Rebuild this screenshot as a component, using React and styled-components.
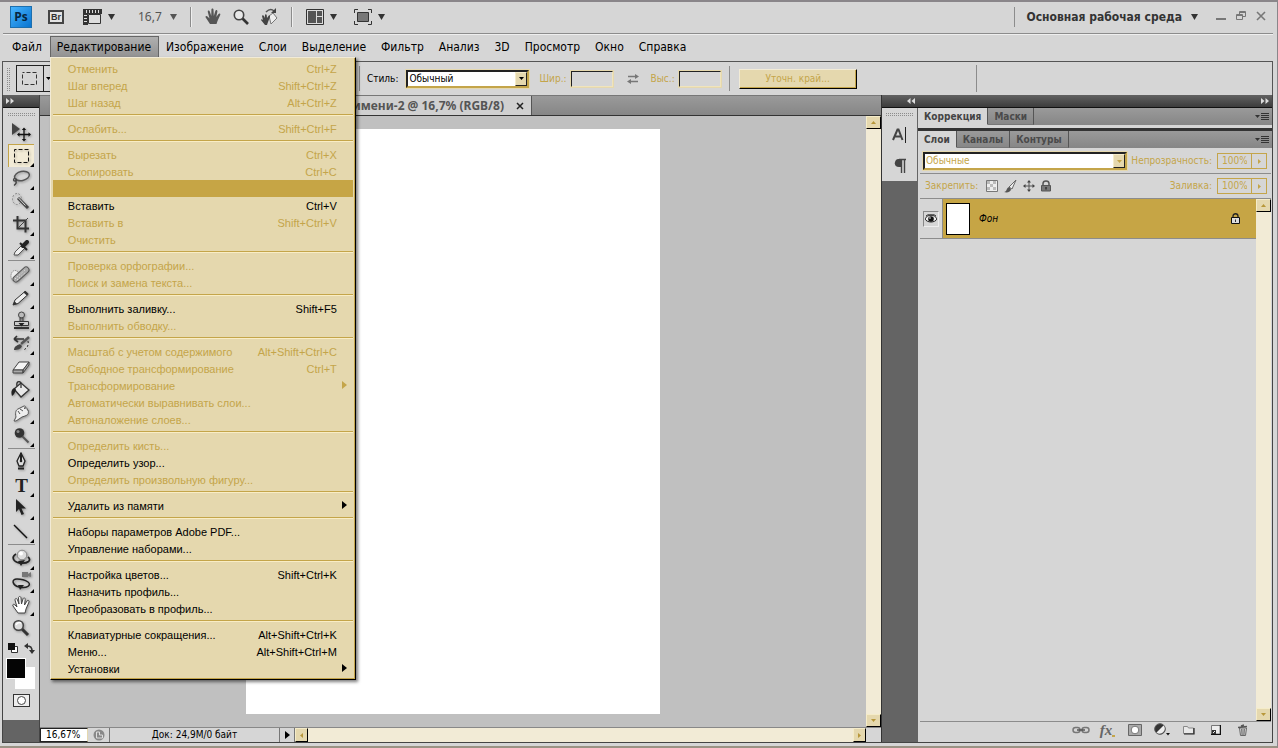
import React from "react"
import styled, { createGlobalStyle } from "styled-components"

const mainMenu = ["Файл", "Редактирование", "Изображение", "Слои", "Выделение", "Фильтр", "Анализ", "3D", "Просмотр", "Окно", "Справка"]

const editMenu = [
  [
    { text: "Отменить", keys: "Ctrl+Z", off: true },
    { text: "Шаг вперед", keys: "Shift+Ctrl+Z", off: true },
    { text: "Шаг назад", keys: "Alt+Ctrl+Z", off: true },
  ],
  [{ text: "Ослабить...", keys: "Shift+Ctrl+F", off: true }],
  [
    { text: "Вырезать", keys: "Ctrl+X", off: true },
    { text: "Скопировать", keys: "Ctrl+C", off: true },
    { text: "", hot: true },
    { text: "Вставить", keys: "Ctrl+V" },
    { text: "Вставить в", keys: "Shift+Ctrl+V", off: true },
    { text: "Очистить", off: true },
  ],
  [
    { text: "Проверка орфографии...", off: true },
    { text: "Поиск и замена текста...", off: true },
  ],
  [
    { text: "Выполнить заливку...", keys: "Shift+F5" },
    { text: "Выполнить обводку...", off: true },
  ],
  [
    { text: "Масштаб с учетом содержимого", keys: "Alt+Shift+Ctrl+C", off: true },
    { text: "Свободное трансформирование", keys: "Ctrl+T", off: true },
    { text: "Трансформирование", sub: true, off: true },
    { text: "Автоматически выравнивать слои...", off: true },
    { text: "Автоналожение слоев...", off: true },
  ],
  [
    { text: "Определить кисть...", off: true },
    { text: "Определить узор..." },
    { text: "Определить произвольную фигуру...", off: true },
  ],
  [{ text: "Удалить из памяти", sub: true }],
  [{ text: "Наборы параметров Adobe PDF..." }, { text: "Управление наборами..." }],
  [
    { text: "Настройка цветов...", keys: "Shift+Ctrl+K" },
    { text: "Назначить профиль..." },
    { text: "Преобразовать в профиль..." },
  ],
  [
    { text: "Клавиатурные сокращения...", keys: "Alt+Shift+Ctrl+K" },
    { text: "Меню...", keys: "Alt+Shift+Ctrl+M" },
    { text: "Установки", sub: true },
  ],
]

const tools = [
  [
    { name: "move", single: true, art: <><path d="M4 1v12l8-6z" fill="#444" /><path d="M16 7v11M11 12.500h10" stroke="#111" strokeWidth="1.300" /><path d="M16 5.500l2.200 2.500h-4.400zM16 19.500l2.200-2.500h-4.400zM9 12.500l2.500-2.200v4.400zM23 12.500l-2.500-2.200v4.400z" fill="#111" /></> },
    { name: "marquee", active: true, art: <rect x="6.500" y="4.500" width="14" height="13" fill="none" stroke="#111" strokeDasharray="4 2" strokeDashoffset="2" /> },
    { name: "lasso", art: <><ellipse cx="14" cy="8" rx="7.500" ry="4.500" transform="rotate(-12 14 8)" fill="none" stroke="#555" strokeWidth="1.500" /><path d="M7 10c-2 1-2 3 0 3s2-2 .5-2.500M8 13c1 2 0 3-2 4.500" fill="none" stroke="#444" strokeWidth="1.300" /></> },
    { name: "wand", art: <><ellipse cx="9" cy="8" rx="4.500" ry="5.500" fill="none" stroke="#888" strokeDasharray="2 1.500" /><path d="M10 7l10 10" stroke="#444" strokeWidth="3" /><path d="M10.500 7l7 7.500" stroke="#ddd" strokeWidth="1" /></> },
    { name: "crop", art: <><path d="M5 6.500h12.500v12M9.500 2v12.500H21" fill="none" stroke="#333" strokeWidth="2" /><path d="M10 14l10-10" stroke="#444" /></> },
    { name: "eyedropper", art: <><path d="M6 18l1-3 7-7 3 3-7 7z" fill="#eee" stroke="#555" /><path d="M12 6l7 7" stroke="#222" strokeWidth="2" /><path d="M15 9l4-4" stroke="#222" strokeWidth="4" strokeLinecap="round" /></> },
  ],
  [
    { name: "healing", art: <><ellipse cx="7" cy="12" rx="4" ry="5.500" fill="#eee" stroke="#777" strokeDasharray="1 1" /><path d="M8 15L18 6" stroke="#555" strokeWidth="7" strokeLinecap="round" /><path d="M8 15L18 6" stroke="#aaa" strokeWidth="5" strokeLinecap="round" /><path d="M7 15L18 5M9 16l9-8" stroke="#eee" strokeDasharray="1 2" /></> },
    { name: "pencil", art: <><path d="M5 18l2-5L17 4.500l3 3L10 16.500z" fill="#eee" stroke="#333" /><path d="M5 18l1.500-4 2.500 3zM15.500 5.500l1.800-1.800 3.200 3-1.700 1.800z" fill="#333" /></> },
    { name: "stamp", art: <><circle cx="13.500" cy="5" r="3" fill="#bbb" stroke="#444" /><path d="M12 8h3v4h-3z" fill="#888" stroke="#444" /><path d="M6.500 11.500h14v4h-14z" fill="#ccc" stroke="#333" /><path d="M6 18h15" stroke="#333" strokeWidth="2" /><path d="M10.500 13h6l-3 3.500z" fill="#222" /></> },
    { name: "history", art: <><path d="M6 6h10M6 6l3-3M6 6l4 3" stroke="#333" strokeWidth="1.600" fill="none" /><path d="M6 17c0-4 4-5 6-6l2 2c-1 3-4 4-8 4z" fill="#444" /><path d="M13 11l8-7" stroke="#555" strokeWidth="2.500" /><path d="M20 8c1 4-1 8-5 9" fill="none" stroke="#222" strokeDasharray="2 2" /></> },
    { name: "eraser", art: <><path d="M5 14l6-8h10l-6 8z" fill="#f4f4f4" stroke="#444" /><path d="M5 14v3h10v-3zM15 17l6-8V6l-6 8z" fill="#aaa" stroke="#444" /></> },
    { name: "bucket", art: <><path d="M6 10l7-6 8 7-8 7z" fill="#e8e8e8" stroke="#333" strokeWidth="1.300" /><path d="M9 7c-1-4 2-6 4-3v5" fill="none" stroke="#333" strokeWidth="1.300" /><path d="M7 9c-4 1-4 4-3 8 2-1 3-4 4-6z" fill="#222" /></> },
    { name: "smudge", art: <path d="M6 19l2-4c-1-5 0-7 2-8l6-3c2 0 2 1 0 2.500 3-1 4 0 3 1.500 2 0 2 1 1 2 1 1 0 3-3 4l-3 1-6 4zM10 9l2 3M12 7l3 2" fill="#eee" stroke="#555" /> },
    { name: "burn", art: <><circle cx="11.500" cy="8" r="4.800" fill="#333" /><circle cx="10" cy="6.500" r="1.500" fill="#888" /><path d="M14.500 11.500l6 6" stroke="#555" strokeWidth="2" /></> },
  ],
  [
    { name: "pen", art: <><path d="M13 1l4 8-2 5h-4l-2-5z" fill="#ddd" stroke="#222" strokeWidth="1.300" /><path d="M13 1v7M10 16.500h6" stroke="#222" strokeWidth="2" /><circle cx="13" cy="9" r="1.300" fill="#222" /></> },
    { name: "type", type: true },
    { name: "path", art: <path d="M8 1v13l3-3 2.500 6 2.500-1-2.500-5.500H18z" fill="#222" /> },
    { name: "line", art: <path d="M6 4l13 13" stroke="#111" strokeWidth="1.400" /> },
  ],
  [
    { name: "rotate3d", art: <><path d="M8 6c-5 3-3 8 4 9 8 1 12-3 8-6" fill="none" stroke="#222" strokeWidth="1.800" /><path d="M17 12l-4 6-3-5z" fill="#222" /><circle cx="14" cy="7" r="4.800" fill="#ddd" stroke="#888" /><circle cx="13" cy="5.500" r="2" fill="#fff" /></> },
    { name: "orbit3d", art: <><path d="M9 8c-6 0-5 6 2 8 8 2 13-2 9-5-3-2-7-3-11-3" fill="none" stroke="#222" strokeWidth="1.500" /><path d="M16 14l-4 5-2-5z" fill="#222" /><path d="M14 1h6v5h-6zM20 3l3-2v5l-3-1z" fill="#777" /></> },
    { name: "hand", art: <path d="M10 19l-5-7c-1-2 1-2 2-1l2 2-2-7c0-2 2-2 2.500 0l1.500 4-.5-6c0-2 2.300-2 2.500 0l.5 6 1.500-5c.5-2 2.500-1 2.200.5L16.500 11l2.500-4c1-1.500 2.500-.5 2 1l-3 7-1 4z" fill="#fff" stroke="#444" /> },
    { name: "zoom", single: true, art: <><path d="M14 12l6 6" stroke="#333" strokeWidth="3" /><circle cx="10.500" cy="8.500" r="4.800" fill="#ddd" stroke="#444" strokeWidth="1.600" /><path d="M8 8c1-2 3-3 5-2" stroke="#fff" strokeWidth="1.500" fill="none" /></> },
  ],
]

const Down = () => <svg width="7" height="6" viewBox="0 0 7 6"><path d="M0 0h7L3.500 6z" fill="currentColor" /></svg>
const SmallDown = () => <svg width="5" height="3" viewBox="0 0 5 3"><path d="M0 0h5L2.500 3z" fill="currentColor" /></svg>
const SmallUp = () => <svg width="5" height="3" viewBox="0 0 5 3"><path d="M0 3h5L2.500 0z" fill="currentColor" /></svg>
const SmallRight = () => <svg width="3" height="5" viewBox="0 0 3 5"><path d="M0 0v5l3-2.500z" fill="currentColor" /></svg>
const SmallLeft = () => <svg width="3" height="5" viewBox="0 0 3 5"><path d="M3 0v5L0 2.500z" fill="currentColor" /></svg>
const Play = () => <svg width="5" height="8" viewBox="0 0 5 8"><path d="M0 0v8l5-4z" fill="currentColor" /></svg>
const Chevrons = ({ left }) => (
  <svg width="8" height="6" viewBox="0 0 8 6">
    <path d={left ? "M3.500 0v6L0 3zM8 0v6L4.500 3z" : "M0 0v6l3.500-3zM4.500 0v6L8 3z"} fill="#ddd" />
  </svg>
)
const PanelMenuIcon = () => (
  <svg width="14" height="8" viewBox="0 0 14 8">
    <path d="M0 2h5L2.500 5z" fill="#333" />
    <path d="M6 .5h8M6 2.500h8M6 4.500h8M6 6.500h8" stroke="#333" />
  </svg>
)

const App = () => {
  return (
    <>
      <Global />
      <Window>
        <AppBar>
          <Logo>Ps</Logo>
          <BridgeButton>Br</BridgeButton>
          <BarButton aria-label="extras">
            <svg width="19" height="16" viewBox="0 0 19 16">
              <path d="M0 0h19v5H5v11H0z" fill="#333" />
              <path d="M5.500 5.500h12v9h-12z" fill="#ddd" stroke="#333" />
              <path d="M3.500 1v3M6.500 1v3M9.500 1v3M12.500 1v3M15.500 1v3M1 6.500h3M1 9.500h3M1 12.500h3" stroke="#ddd" />
            </svg>
            <Down />
          </BarButton>
          <ZoomLevel>16,7 <Down /></ZoomLevel>
          <BarLine />
          <IconGroup>
            <BarButton aria-label="hand">
              <svg width="16" height="17" viewBox="0 0 16 17"><path d="M5 16L.7 9.500C0 8 1.500 7.500 2.500 8.500L4.500 10.500 2.800 4C2.500 2.300 4.400 2 4.800 3.600L6.300 8 6.400 1.600C6.500 0 8.400 0 8.500 1.600L8.800 8l1.600-5.200c.6-1.500 2.200-.9 2 .7L11.300 9l2.200-3c1-1.200 2.300-.5 1.700 1L12.500 13l-1 3z" fill="#555" /></svg>
            </BarButton>
            <BarButton aria-label="zoom">
              <svg width="16" height="16" viewBox="0 0 16 16"><path d="M9 9l6 6" stroke="#333" strokeWidth="2.600" /><circle cx="6" cy="6" r="4.700" fill="#e8e8e8" stroke="#444" strokeWidth="1.600" /></svg>
            </BarButton>
            <BarButton aria-label="rotate view">
              <svg width="17" height="18" viewBox="0 0 17 18"><path d="M8 8l4-3 4 5-6 6z" fill="#eee" stroke="#777" /><path d="M4 17L0 12c0-1 1-1 2 0L1 8c0-1 1.500-1 2 0l1 2V7c0-1 1.500-1 1.700 0l.3 3 1.500-2c.7-1 2 0 1.500 1l-2 5-1 3z" fill="#444" /><path d="M5 4c3-3 6-3 8-1" fill="none" stroke="#555" strokeWidth="1.500" /><path d="M15 0v5h-5z" fill="#444" /></svg>
            </BarButton>
          </IconGroup>
          <BarLine />
          <BarButton aria-label="arrange">
            <svg width="18" height="16" viewBox="0 0 18 16"><path d="M.5.5h17v15H.5z" fill="#ddd" stroke="#333" /><path d="M2 2h8v12H2zM11 2h5v5h-5zM11 8h5v6h-5z" fill="#555" /></svg>
            <Down />
          </BarButton>
          <ScreenButton aria-label="screen mode">
            <svg width="18" height="16" viewBox="0 0 18 16"><path d="M.5 4V.5H4M14 .5h3.500V4M17.500 12v3.500H14M4 15.500H.5V12" fill="none" stroke="#333" /><path d="M3.500 3.500h11v9h-11z" fill="#777" stroke="#333" /></svg>
            <Down />
          </ScreenButton>
          <Workspace>
            Основная рабочая среда <Down />
          </Workspace>
          <WindowButton aria-label="minimize"><svg width="10" height="12" viewBox="0 0 10 12"><path d="M0 8h10" stroke="#777" strokeWidth="2" /></svg></WindowButton>
          <WindowButton aria-label="restore"><svg width="10" height="12" viewBox="0 0 10 12"><path d="M3.500 3V.5h6v5H7M3 1.500h7M.5 3.500h6v5h-6zM0 4.500h7" fill="none" stroke="#777" /></svg></WindowButton>
          <WindowButton aria-label="close"><svg width="10" height="12" viewBox="0 0 10 12"><path d="M1 1l8 8M9 1L1 9" stroke="#777" strokeWidth="1.600" /></svg></WindowButton>
        </AppBar>

        <MenuBar>
          {mainMenu.map((name) => (
            <MenuSlot key={name}>
              <MenuTitle $open={name === "Редактирование"}>{name}</MenuTitle>
              {name === "Редактирование" && (
                <DropMenu role="menu">
                  {editMenu.map((group, i) => (
                    <MenuGroup key={i}>
                      {group.map((item) => (
                        <MenuItem key={item.text} role="menuitem" disabled={item.off} $hot={item.hot}>
                          <span>{item.text}</span>
                          {item.keys && <span>{item.keys}</span>}
                          {item.sub && <SubArrow><Play /></SubArrow>}
                        </MenuItem>
                      ))}
                    </MenuGroup>
                  ))}
                </DropMenu>
              )}
            </MenuSlot>
          ))}
        </MenuBar>

        <Options>
          <PresetArea>
            <SideGrip />
            <Preset aria-label="tool preset">
              <svg width="26" height="25" viewBox="0 0 26 25"><path d="M5.500 6.500h14v12h-14z" fill="none" stroke="#333" strokeDasharray="4 2" strokeDashoffset="2" /></svg>
              <PresetArrow><SmallDown /></PresetArrow>
            </Preset>
          </PresetArea>
          <Label htmlFor="style">Стиль:</Label>
          <StyleSelect>
            <Select id="style"><option>Обычный</option></Select>
            <SelectArrow><SmallDown /></SelectArrow>
          </StyleSelect>
          <Label htmlFor="w" $off>Шир.:</Label>
          <SizeInput id="w" disabled />
          <SwapIcon width="14" height="12" viewBox="0 0 14 12">
            <path d="M2 3.500h8M12 8.500H4" stroke="#777" strokeWidth="1.500" /><path d="M9 1l4 2.500L9 6zM5 6L1 8.500 5 11z" fill="#777" />
          </SwapIcon>
          <Label htmlFor="h" $off>Выс.:</Label>
          <SizeInput id="h" disabled />
          <OptionLine />
          <Refine disabled>Уточн. край...</Refine>
          <EndLine />
        </Options>

        <Main>
          <ToolColumn>
            <DarkHead><Chevrons /></DarkHead>
            <ToolBox>
              <TopGrip />
              {tools.map((group, i) => (
                <ToolGroup key={i}>
                  {group.map((tool) => (
                    <Tool key={tool.name} aria-label={tool.name} $active={tool.active} $single={tool.single}>
                      {tool.type ? <TypeSign>T</TypeSign> : <svg width="26" height="22" viewBox="0 0 26 22">{tool.art}</svg>}
                    </Tool>
                  ))}
                </ToolGroup>
              ))}
              <MiniRow>
                <svg width="11" height="11" viewBox="0 0 11 11"><path d="M3.500 3.500h6v6h-6z" fill="#fff" stroke="#333" /><path d="M0 0h7v7H0z" fill="#111" /></svg>
                <svg width="11" height="11" viewBox="0 0 11 11"><path d="M2 3c5 0 6 1 6 6" fill="none" stroke="#333" strokeWidth="1.500" /><path d="M0 3l4-3v6zM8 11L5 7h6z" fill="#333" /></svg>
              </MiniRow>
              <Swatches>
                <BackColor aria-label="background" />
                <FrontColor aria-label="foreground" />
              </Swatches>
              <QuickMask aria-label="quick mask">
                <svg width="11" height="11" viewBox="0 0 11 11"><circle cx="5.500" cy="5.500" r="4" fill="#fff" stroke="#444" /></svg>
              </QuickMask>
            </ToolBox>
          </ToolColumn>

          <Documents>
            <DocTabs>
              <DocTab>Без имени-1 @ 16,7% (RGB/8)</DocTab>
              <DocTab $active>
                Без имени-2 @ 16,7% (RGB/8)
                <svg width="8" height="8" viewBox="0 0 8 8"><path d="M1 1l6 6M7 1L1 7" stroke="#222" strokeWidth="1.500" /></svg>
              </DocTab>
            </DocTabs>
            <View>
              <Canvas><Sheet /></Canvas>
              <VScroll>
                <ScrollButton aria-label="up"><SmallUp /></ScrollButton>
                <ScrollButton aria-label="down"><SmallDown /></ScrollButton>
              </VScroll>
            </View>
            <Status>
              <StatusZoom aria-label="zoom level" defaultValue="16,67%" />
              <StatusIcon aria-label="version">
                <svg width="12" height="12" viewBox="0 0 12 12"><circle cx="6" cy="6" r="5.500" fill="#888" /><path d="M3.500 9V3h3v3h3v3z" fill="none" stroke="#ddd" /></svg>
              </StatusIcon>
              <StatusInfo>Док: 24,9М/0 байт</StatusInfo>
              <StatusPlay aria-label="status menu"><Play /></StatusPlay>
              <HScroll>
                <ScrollButton aria-label="left" $side><SmallLeft /></ScrollButton>
                <ScrollButton aria-label="right" $side><SmallRight /></ScrollButton>
              </HScroll>
              <Corner />
            </Status>
          </Documents>

          <Dock>
            <DockStrip>
              <DarkHead $end><Chevrons left /></DarkHead>
              <StripBox>
                <TopGrip />
                <StripButton aria-label="character">
                  <svg width="15" height="20" viewBox="0 0 15 20"><path d="M1 14L5.500 3.500h1L10.500 14M2.500 10.500h7" fill="none" stroke="#444" strokeWidth="2" /><path d="M13.500 1v16" stroke="#222" /></svg>
                </StripButton>
                <StripButton aria-label="paragraph">
                  <svg width="12" height="16" viewBox="0 0 12 16"><path d="M7.500 15V1.500M10.500 15V1.500M5 1.500h7" stroke="#444" strokeWidth="1.400" /><path d="M7 1H4.500C0 1-1 9 5 9h2z" fill="#444" /></svg>
                </StripButton>
              </StripBox>
            </DockStrip>

            <Panels>
              <DarkHead $end><Chevrons /></DarkHead>
              <PanelTabs>
                <PanelTab $active>Коррекция</PanelTab>
                <PanelTab>Маски</PanelTab>
                <PanelMenu aria-label="panel menu"><PanelMenuIcon /></PanelMenu>
              </PanelTabs>
              <Gap />
              <PanelTabs>
                <PanelTab $active>Слои</PanelTab>
                <PanelTab>Каналы</PanelTab>
                <PanelTab>Контуры</PanelTab>
                <PanelMenu aria-label="panel menu"><PanelMenuIcon /></PanelMenu>
              </PanelTabs>
              <LayersPanel>
                <LayerOptions>
                  <BlendSelect>
                    <Select aria-label="blend mode" disabled><option>Обычные</option></Select>
                    <SelectArrow $off><SmallDown /></SelectArrow>
                  </BlendSelect>
                  <PercentLabel htmlFor="opacity">Непрозрачность:</PercentLabel>
                  <Percent>
                    <PercentInput id="opacity" disabled defaultValue="100%" />
                    <PercentArrow><SmallRight /></PercentArrow>
                  </Percent>
                </LayerOptions>
                <LayerOptions>
                  <LockLabel>Закрепить:</LockLabel>
                  <LockIcons>
                    <svg width="12" height="12" viewBox="0 0 12 12"><path d="M.5.5h11v11H.5z" fill="#eee" stroke="#777" /><path d="M1 1h3v3H1zM7 1h3v3H7zM4 4h3v3H4zM1 7h3v3H1zM7 7h3v3H7z" fill="#bbb" /></svg>
                    <svg width="13" height="13" viewBox="0 0 13 13"><path d="M5 7l7-7-4 9z" fill="#eee" stroke="#666" /><path d="M0 12c3 0 2-4 5-5l2 2c0 3-4 4-7 3z" fill="#555" /></svg>
                    <svg width="12" height="12" viewBox="0 0 12 12"><path d="M6 1v10M1 6h10" stroke="#555" /><path d="M6 0l2 2.500H4zM6 12l2-2.500H4zM0 6l2.500-2v4zM12 6L9.500 4v4z" fill="#444" /></svg>
                    <svg width="10" height="12" viewBox="0 0 10 12"><path d="M2 6V3.500c0-3.500 6-3.500 6 0V6" fill="none" stroke="#555" strokeWidth="1.500" /><path d="M.5 5.500h9v5.500h-9z" fill="#777" stroke="#555" /><path d="M5 7v2.500" stroke="#333" strokeWidth="1.500" /></svg>
                  </LockIcons>
                  <PercentLabel htmlFor="fill">Заливка:</PercentLabel>
                  <Percent>
                    <PercentInput id="fill" disabled defaultValue="100%" />
                    <PercentArrow><SmallRight /></PercentArrow>
                  </Percent>
                </LayerOptions>
                <LayerArea>
                  <LayerList>
                    <Layer>
                      <Eye aria-label="visibility">
                        <svg width="12" height="10" viewBox="0 0 12 10"><path d="M0 5c2-5 10-5 12 0-2 4-10 4-12 0z" fill="#eee" stroke="#222" /><circle cx="6" cy="5" r="2.800" fill="#111" /><circle cx="5" cy="4" r=".8" fill="#fff" /><path d="M1 2c3-2.500 7-2.500 10 0" fill="none" stroke="#333" /></svg>
                      </Eye>
                      <LayerBody>
                        <Thumb />
                        <LayerName>Фон</LayerName>
                        <svg width="9" height="11" viewBox="0 0 9 11"><path d="M2 5V3c0-3 5-3 5 0v2" fill="none" stroke="#222" strokeWidth="1.300" /><path d="M.5 4.500h8v6h-8z" fill="#ddd" stroke="#111" /><path d="M4.500 6.500v2.500" stroke="#333" /></svg>
                      </LayerBody>
                    </Layer>
                  </LayerList>
                  <VScroll>
                    <ScrollButton aria-label="up"><SmallUp /></ScrollButton>
                    <ScrollButton aria-label="down"><SmallDown /></ScrollButton>
                  </VScroll>
                </LayerArea>
                <LayerFooter>
                  <FootButton aria-label="link"><svg width="18" height="8" viewBox="0 0 18 8"><rect x="1" y="1.500" width="7" height="5" rx="2.500" fill="none" stroke="#777" strokeWidth="1.500" /><rect x="10" y="1.500" width="7" height="5" rx="2.500" fill="none" stroke="#777" strokeWidth="1.500" /><path d="M5 4h8" stroke="#555" strokeWidth="1.500" /></svg></FootButton>
                  <FootButton aria-label="effects"><Fx>fx<FxDot /></Fx></FootButton>
                  <FootButton aria-label="mask"><svg width="14" height="12" viewBox="0 0 14 12"><path d="M.5.500h13v11H.5z" fill="#aaa" stroke="#666" /><circle cx="7" cy="6" r="3.800" fill="#fff" stroke="#777" /></svg></FootButton>
                  <FootButton aria-label="adjustment"><svg width="16" height="13" viewBox="0 0 16 13"><circle cx="6" cy="6" r="5.300" fill="#333" stroke="#555" /><path d="M2.500 9.500l7-7c4 4-2 11-7 7z" fill="#eee" /><path d="M12 10h4l-2 2.500z" fill="#111" /></svg></FootButton>
                  <FootButton aria-label="group"><svg width="12" height="10" viewBox="0 0 12 10"><path d="M.5 8.500v-7h4l1 1.500h5v5.500z" fill="#e8e8e8" stroke="#888" /><path d="M1 9h10V3" fill="none" stroke="#222" strokeWidth="1.200" /></svg></FootButton>
                  <FootButton aria-label="new layer"><svg width="10" height="10" viewBox="0 0 10 10"><path d="M.5.500h9v9h-9z" fill="#eee" stroke="#777" /><path d="M9.500 0v9.500H0" stroke="#111" fill="none" strokeWidth="1.500" /><path d="M1 5h4v4H1z" fill="#333" /><path d="M2 8l2-2" stroke="#eee" /></svg></FootButton>
                  <FootButton aria-label="delete"><svg width="10" height="12" viewBox="0 0 10 12"><path d="M1.500 4l1 7.500h5l1-7.500z" fill="#ddd" stroke="#666" /><path d="M3.500 5l.5 6M5 5v6M6.500 5L6 11" stroke="#777" /><path d="M0 3.500l9-1M3 2l3-1" stroke="#555" strokeWidth="1.500" /></svg></FootButton>
                </LayerFooter>
              </LayersPanel>
            </Panels>
          </Dock>
        </Main>
      </Window>
    </>
  )
}
export default App

const gold = "#c4a54a"
const cond = `"DejaVu Sans Condensed", "DejaVu Sans", sans-serif`

const Global = createGlobalStyle`
* {
box-sizing: border-box;
}
body {
margin: 0;
background: #d6d6d6;
color: #000;
font: 10px/14px ${cond};
}
button {
margin: 0;
padding: 0;
border: none;
background: none;
color: inherit;
font: inherit;
}
svg {
display: block;
flex: none;
}
`
const Window = styled.div`
display: flex;
flex-direction: column;
min-height: 100vh;
padding: 0 4px 0 2px;
border-top: 2px solid #8a868a;
border-right: 1px solid #8a868a;
border-bottom: 2px solid #9a9284;
background: #d6d6d6;
`
const AppBar = styled.header`
display: flex;
align-items: center;
height: 32px;
padding: 0 7px 2px 7px;
margin-left: 1px;
border-bottom: 1px solid #8c8c8c;
box-shadow: 0 1px #efefef;
color: #333;
`
const Logo = styled.div`
display: grid;
place-items: center;
width: 22px;
height: 22px;
border: 1px solid #1d6fae;
background: linear-gradient(135deg, #46b4ff, #0a74cf);
color: #06263f;
font: bold 12px/20px "Open Sans", sans-serif;
`
const BridgeButton = styled.button`
width: 16px;
height: 14px;
margin: 0 19px 0 16px;
border: 2px solid #444;
background: #e4e4e4;
font: bold 9px/10px "Liberation Sans", sans-serif;
`
const BarButton = styled.button`
display: flex;
align-items: center;
gap: 6px;
`
const ScreenButton = styled(BarButton)`
margin-left: 17px;
`
const ZoomLevel = styled.button`
display: flex;
align-items: center;
gap: 8px;
margin-left: 23px;
color: #555;
font: 12px/16px "Noto Sans", sans-serif;
`
const BarLine = styled.span`
width: 2px;
height: 20px;
margin: 0 13px;
border-left: 1px solid #8c8c8c;
border-right: 1px solid #efefef;
`
const IconGroup = styled.div`
display: flex;
align-items: center;
gap: 12px;
`
const Workspace = styled.button`
display: flex;
align-items: center;
gap: 9px;
height: 20px;
margin-left: auto;
margin-right: 8px;
padding-left: 11px;
border-left: 1px solid #8c8c8c;
font: bold 12px/20px ${cond};
`
const WindowButton = styled.button`
margin-left: 10px;
`
const MenuBar = styled.nav`
display: flex;
padding: 2px 0 4px 3px;
`
const MenuSlot = styled.div`
position: relative;
z-index: 5;
`
const MenuTitle = styled.button`
height: 21px;
padding: 0 7px 0 6px;
border: 1px solid ${p => (p.$open ? "#666" : "transparent")};
border-bottom: none;
background: ${p => (p.$open ? "linear-gradient(#b0b0b0, #929292)" : "none")};
font: 12px/19px ${cond};
`
const DropMenu = styled.div`
position: absolute;
top: 100%;
left: 0;
width: 306px;
padding: 2px 1px 2px 2px;
border: 1px solid #000;
border-color: #f2ebd6 #000 #000 #f2ebd6;
background: #e5d8ae;
box-shadow: inset -1px -1px ${gold}, 2px 2px 3px rgba(0, 0, 0, .5);
`
const MenuGroup = styled.div`
& + & {
padding-top: 9px;
background: linear-gradient(${gold}, ${gold}) 0 3px / 300px 1px no-repeat, linear-gradient(#f9edc5, #f9edc5) 0 4px / 300px 1px no-repeat;
}
`
const MenuItem = styled.button`
position: relative;
display: flex;
justify-content: space-between;
width: 300px;
height: 17px;
padding: 1px 16px 0 15px;
background: ${p => (p.$hot ? "#c6a545" : "none")};
color: ${p => (p.disabled ? gold : "#000")};
font: 11px/16px "Liberation Sans", Arial, sans-serif;
`
const SubArrow = styled.span`
position: absolute;
right: 6px;
top: 4px;
`
const Options = styled.section`
display: flex;
align-items: center;
height: 34px;
border: 1px solid #555;
border-bottom: none;
`
const PresetArea = styled.div`
display: flex;
align-items: center;
width: 357px;
height: 25px;
padding-left: 4px;
margin-right: 7px;
border-right: 1px solid #8c8c8c;
`
const dots = "linear-gradient(#d6d6d6 1px, transparent 1px) 0 0 / 2px 2px, linear-gradient(90deg, #8c8c8c 1px, transparent 1px) 0 0 / 2px 2px"
const SideGrip = styled.span`
width: 4px;
height: 24px;
margin-right: 5px;
background: ${dots};
`
const Preset = styled.button`
display: flex;
width: 38px;
height: 27px;
border: 1px solid #222;
`
const PresetArrow = styled.span`
display: grid;
place-items: center;
width: 10px;
height: 25px;
border-left: 1px solid #222;
`
const Label = styled.label`
margin-right: ${p => (p.$off ? "4px" : "8px")};
color: ${p => (p.$off ? gold : "#000")};
font: 10px/16px ${cond};
`
const SelectBox = styled.span`
display: flex;
height: 18px;
border: 2px solid #222;
border-color: #222 ${gold} ${gold} #222;
outline: 1px solid #e5d8ae;
background: #fff;
`
const StyleSelect = styled(SelectBox)`
width: 123px;
margin-right: 10px;
`
const BlendSelect = styled(SelectBox)`
flex: 1;
margin-right: 4px;
`
const Select = styled.select`
flex: 1;
min-width: 0;
padding: 0 1px;
border: none;
appearance: none;
background: #fff;
color: ${p => (p.disabled ? gold : "#000")};
opacity: 1;
font: 10px/14px ${cond};
`
const SelectArrow = styled.span`
display: grid;
place-items: center;
width: 12px;
margin-left: -12px;
border: 1px solid #f5ecc9;
border-right-color: #222;
border-bottom-color: #222;
background: #e5d8ae;
color: ${p => (p.$off ? gold : "#000")};
pointer-events: none;
`
const SizeInput = styled.input`
width: 42px;
height: 16px;
border: 1px solid #222;
border-right-color: #f0e4bc;
border-bottom-color: #f0e4bc;
outline: 1px solid #e5d8ae;
background: #d6d6d6;
`
const SwapIcon = styled.svg`
margin: 0 11px 0 13px;
`
const OptionLine = styled.span`
height: 25px;
margin: 0 9px 0 8px;
border-left: 1px solid #8c8c8c;
`
const EndLine = styled(OptionLine)`
height: 27px;
margin-left: 119px;
`
const Refine = styled.button`
width: 118px;
height: 20px;
border: 1px solid #f2ebd6;
border-right-color: #000;
border-bottom-color: #000;
background: #e5d8ae;
color: ${gold};
box-shadow: inset -1px -1px ${gold};
`
const Main = styled.main`
display: flex;
flex: 1;
margin-bottom: 3px;
border: 1px solid #444;
border-top: none;
background: #646464;
`
const DarkHead = styled.div`
display: flex;
align-items: center;
justify-content: ${p => (p.$end ? "flex-end" : "flex-start")};
flex: none;
height: 13px;
padding: 0 3px;
border-bottom: 1px solid #111;
background: linear-gradient(#626262, #3c3c3c);
`
const ToolColumn = styled.aside`
width: 37px;
border-right: 1px solid #444;
`
const ToolBox = styled.div`
display: flex;
flex-direction: column;
height: 612px;
padding: 0 4px 0 5px;
background: #d6d6d6;
`
const TopGrip = styled.span`
flex: none;
height: 4px;
margin: 4px 0 5px;
background: ${dots};
`
const ToolGroup = styled.div`
& + & {
padding-top: 4px;
background: linear-gradient(#8c8c8c, #8c8c8c) 0 1px / 100% 1px no-repeat;
}
`
const Tool = styled.button`
position: relative;
display: block;
width: 26px;
height: 23px;
border: 1px solid ${p => (p.$active ? gold : "transparent")};
border-width: 1px 0 0 1px;
background: ${p => (p.$active ? "#f2ebd6" : "none")};
&::after {
content: "";
position: absolute;
right: 0;
bottom: 0;
border: 2px solid #000;
border-left-color: transparent;
border-top-color: transparent;
display: ${p => (p.$single ? "none" : "block")};
}
& svg {
margin-left: -1px;
filter: drop-shadow(1px 1px 1px rgba(0, 0, 0, .3));
}
`
const TypeSign = styled.span`
color: #222;
font: bold 19px/20px "Liberation Serif", serif;
`
const MiniRow = styled.div`
display: flex;
justify-content: space-between;
padding: 4px 0 0;
height: 19px;
`
const Swatches = styled.div`
display: grid;
grid-template-columns: 9px 11px 9px;
grid-template-rows: 9px 12px 10px;
margin-left: -2px;
`
const FrontColor = styled.button`
grid-area: 1 / 1 / 3 / 3;
border: 1px solid #fff;
background: #050505;
`
const BackColor = styled.button`
grid-area: 2 / 2 / 4 / 4;
background: #fff;
`
const QuickMask = styled.button`
display: grid;
place-items: center;
align-self: center;
width: 17px;
height: 13px;
margin-top: 5px;
border: 1px solid #333;
background: #eee;
`
const Documents = styled.section`
display: flex;
flex: 1;
flex-direction: column;
min-width: 0;
background: #d6d6d6;
`
const DocTabs = styled.div`
display: flex;
height: 21px;
border-top: 1px solid #777;
border-bottom: 1px solid #333;
background: linear-gradient(#9a9a9a, #868686);
`
const DocTab = styled.button`
display: flex;
align-items: center;
justify-content: flex-end;
gap: 12px;
width: 246px;
padding: 0 7px;
border-right: 1px solid #555;
background: ${p => (p.$active ? "#d0d0d0" : "none")};
color: #555;
font: bold 12px/18px "Noto Sans", sans-serif;
white-space: nowrap;
`
const View = styled.div`
display: flex;
flex: 1;
`
const Canvas = styled.div`
display: grid;
place-items: center;
flex: 1;
padding: 13px;
background: #c0c0c0;
`
const Sheet = styled.div`
width: 414px;
aspect-ratio: 414 / 585;
background: #fff;
`
const VScroll = styled.div`
display: flex;
flex-direction: column;
justify-content: space-between;
width: 15px;
background: #f2ebd6;
`
const HScroll = styled.div`
display: flex;
flex: 1;
justify-content: space-between;
background: #f2ebd6;
`
const ScrollButton = styled.button`
display: grid;
place-items: center;
width: ${p => (p.$side ? "13px" : "15px")};
height: ${p => (p.$side ? "auto" : "13px")};
border: 1px solid #f5ecc9;
border-right-color: #000;
border-bottom-color: #000;
background: #e5d8ae;
color: #b8973a;
`
const Status = styled.footer`
display: flex;
height: 15px;
border-top: 1px solid #888;
`
const StatusZoom = styled.input`
width: 48px;
padding: 0 5px;
border: 1px solid #222;
border-right-color: #e5d8ae;
background: #fff;
font: 10px/12px ${cond};
`
const StatusIcon = styled.button`
display: grid;
place-items: center;
width: 22px;
border-right: 1px solid #777;
`
const StatusInfo = styled.div`
width: 170px;
border-right: 1px solid #777;
text-align: center;
`
const StatusPlay = styled.button`
display: grid;
place-items: center;
width: 15px;
border-right: 1px solid #777;
`
const Corner = styled.span`
width: 15px;
`
const Dock = styled.aside`
display: flex;
width: 391px;
border-left: 1px solid #333;
`
const DockStrip = styled.div`
width: 36px;
`
const StripBox = styled.div`
display: flex;
flex-direction: column;
height: 73px;
margin-right: 1px;
padding: 0 4px;
background: #d6d6d6;
`
const StripButton = styled.button`
display: grid;
place-items: center;
height: 30px;
`
const Panels = styled.div`
display: flex;
flex: 1;
flex-direction: column;
min-width: 0;
`
const PanelTabs = styled.div`
display: flex;
height: 17px;
background: linear-gradient(#9a9a9a, #868686);
`
const PanelTab = styled.button`
padding: 1px 6px 0;
border-right: 1px solid #555;
border-bottom: 1px solid ${p => (p.$active ? "#d6d6d6" : "#777")};
background: ${p => (p.$active ? "#d6d6d6" : "none")};
color: ${p => (p.$active ? "#444" : "#4a4a4a")};
font: bold 10px/15px ${cond};
`
const PanelMenu = styled.button`
margin-left: auto;
margin-right: 3px;
`
const Gap = styled.div`
height: 6px;
border-top: 3px solid #d6d6d6;
background: #333;
`
const LayersPanel = styled.div`
display: flex;
flex: 1;
flex-direction: column;
padding: 1px 1px 0 2px;
background: #d6d6d6;
`
const LayerOptions = styled.div`
display: flex;
align-items: center;
height: 25px;
padding: 0 4px 0 3px;
border-bottom: 1px solid #8c8c8c;
`
const PercentLabel = styled.label`
margin-left: auto;
margin-right: 5px;
color: ${gold};
`
const LockLabel = styled.span`
margin: 0 8px 0 2px;
color: ${gold};
`
const LockIcons = styled.div`
display: flex;
align-items: center;
gap: 6px;
`
const Percent = styled.span`
display: flex;
width: 50px;
height: 16px;
border: 1px solid ${gold};
`
const PercentInput = styled.input`
flex: 1;
min-width: 0;
padding: 0 4px;
border: none;
background: none;
color: ${gold};
font: 10px/14px ${cond};
`
const PercentArrow = styled.span`
display: grid;
place-items: center;
width: 15px;
border-left: 1px solid ${gold};
color: ${gold};
`
const LayerArea = styled.div`
display: flex;
flex: 1;
`
const LayerList = styled.div`
flex: 1;
`
const Layer = styled.div`
display: flex;
align-items: center;
height: 40px;
border-bottom: 1px solid #8c8c8c;
`
const Eye = styled.button`
display: grid;
place-items: center;
width: 16px;
height: 16px;
margin: 0 3px;
border: 1px solid #888;
border-right-color: #eee;
border-bottom-color: #eee;
`
const LayerBody = styled.div`
display: flex;
align-items: center;
flex: 1;
height: 39px;
padding: 0 16px 0 3px;
border-left: 1px solid #8c8c8c;
background: #c6a545;
`
const Thumb = styled.span`
width: 24px;
height: 32px;
margin-right: 9px;
border: 1px solid #000;
background: #fff;
`
const LayerName = styled.span`
flex: 1;
font-style: italic;
`
const LayerFooter = styled.div`
display: flex;
justify-content: flex-end;
height: 21px;
padding: 0 15px 5px 0;
border-top: 1px solid #8c8c8c;
`
const FootButton = styled.button`
display: grid;
place-items: center;
width: 27px;
`
const Fx = styled.span`
display: flex;
align-items: flex-end;
color: #666;
font: italic bold 15px/14px "Liberation Serif", serif;
`
const FxDot = styled.span`
width: 3px;
height: 2px;
background: ${gold};
`
